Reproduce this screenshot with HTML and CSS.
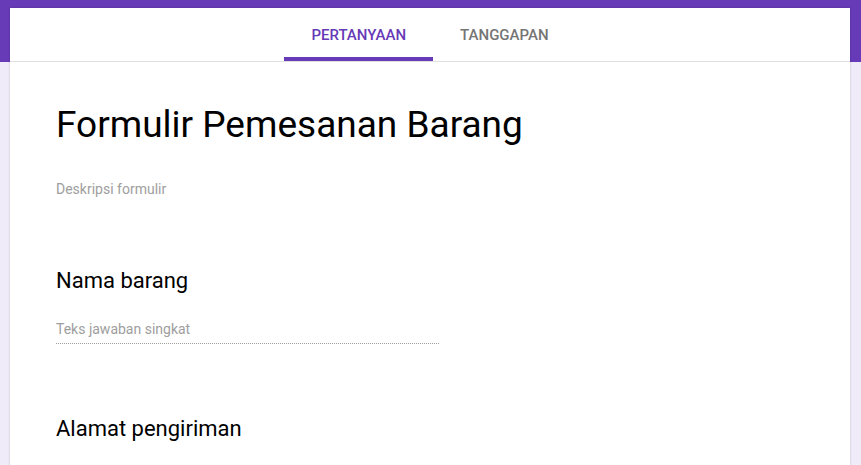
FILE: index.html
```html
<!DOCTYPE html>
<html lang="id">
<head>
    <meta charset="UTF-8">
    <meta name="viewport" content="width=device-width, initial-scale=1.0">
    <link rel="stylesheet" href="styles.css">
    <title>Formulir Pemesanan Barang</title>
</head>
<body>

<div class="band"></div>

<div class="page">
    <div class="card">
        <div class="tabs">
            <div class="tab active">Pertanyaan</div>
            <div class="tab">Tanggapan</div>
        </div>

        <div class="form">
            <h1 class="form-title">Formulir Pemesanan Barang</h1>
            <div class="form-desc">Deskripsi formulir</div>

            <div class="question">
                <div class="question-title">Nama barang</div>
                <div class="answer">Teks jawaban singkat</div>
            </div>

            <div class="question">
                <div class="question-title">Alamat pengiriman</div>
            </div>
        </div>
    </div>
</div>

</body>
</html>
```

FILE: styles.css
```css
body {
    margin: 0;
    background-color: #f0ebf8;
    font-family: Roboto, Arial, sans-serif;
    overflow: hidden;
}

.band {
    position: absolute;
    top: 0;
    left: 0;
    right: 0;
    height: 62px;
    background-color: #673ab7;
}

.page {
    position: relative;
    padding: 8px 11px 0 10px;
}

.card {
    background-color: #fff;
    height: 600px;
    box-shadow: 0 0 2px rgba(0, 0, 0, 0.2);
}

.tabs {
    display: flex;
    justify-content: center;
    height: 53px;
    border-bottom: 1px solid #e0e0e0;
}

.tab {
    display: flex;
    align-items: center;
    padding: 4px 27px 0;
    font-size: 15px;
    font-weight: 500;
    text-transform: uppercase;
    color: #757575;
    box-sizing: border-box;
    border-bottom: 4px solid transparent;
}

.tab.active {
    color: #673ab7;
    border-bottom-color: #673ab7;
}

.form {
    padding: 0 46px;
}

.form-title {
    margin: 39px 0 0;
    font-size: 37px;
    font-weight: 400;
    color: #000;
    line-height: 48px;
}

.form-desc {
    margin-top: 32px;
    font-size: 14px;
    color: #9e9e9e;
}

.question {
    margin-top: 69px;
}

.question-title {
    font-size: 22px;
    color: #000;
    line-height: 30px;
}

.answer {
    width: 383px;
    margin-top: 25px;
    padding-bottom: 6px;
    font-size: 14px;
    color: #9e9e9e;
    border-bottom: 1px dotted #9e9e9e;
}

.question + .question {
    margin-top: 70px;
}
```
